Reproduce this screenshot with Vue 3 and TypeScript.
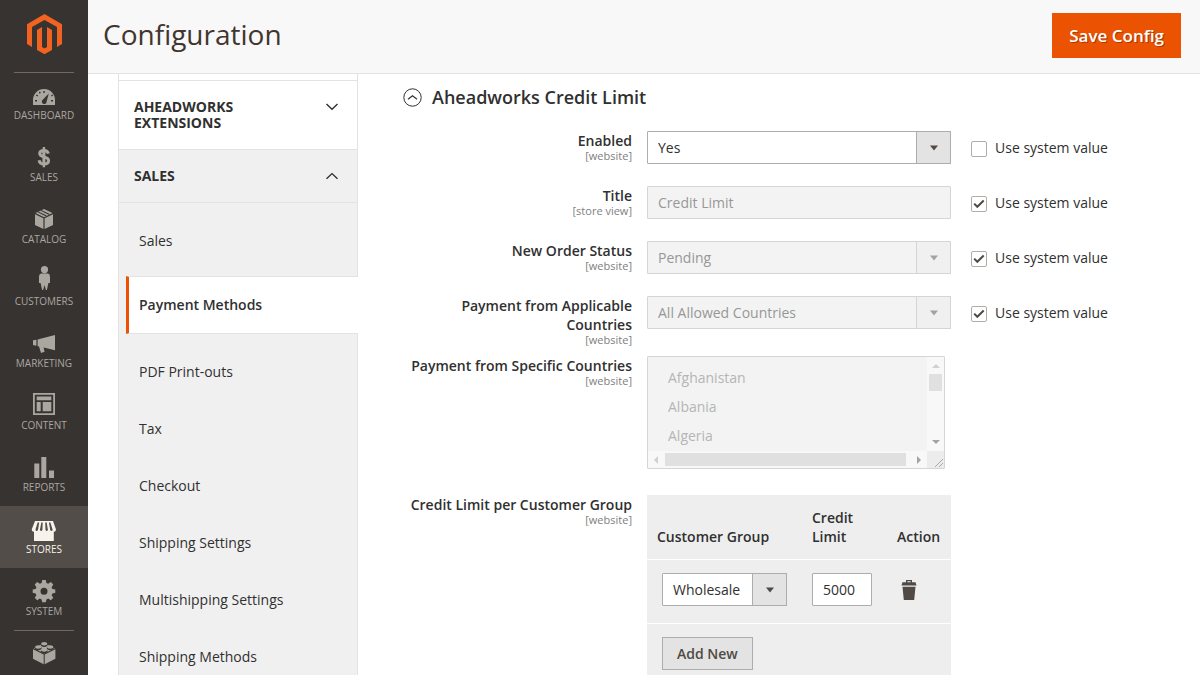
<script setup lang="ts">
import { ref } from 'vue'

interface MenuItem {
  name: string
  label?: string
  shape: string
  cut?: string
  top?: string
  line?: string
  active?: boolean
  divided?: boolean
}

const menu: MenuItem[] = [
  {
    name: 'Dashboard',
    label: 'Dashboard',
    shape: 'M3 22v-5a11 11 0 0 1 22 0v5z',
    cut: 'M13.3 8h1.4v2h-1.4zM8.8 9.3l1.2-.7.8 1.5-1.2.7zM5.9 12.6l.9-1.2 1.4 1-.9 1.2zM5 17h2v1.5H5zM21 17h2v1.5h-2zM21 12.4l1.3-1 .9 1.2-1.4 1zM18.8 10.4l-2.2 8a2.4 2.4 0 1 1-3.6-1.8z',
  },
  {
    name: 'Sales',
    label: 'Sales',
    shape: 'M12.7 2h2.4v3.5h-2.4zM12.7 19h2.4v3.2h-2.4z',
    line: 'M18.4 8.6C17.8 6.4 16.3 5.4 13.9 5.4c-2.6 0-4.2 1.2-4.2 3 0 4.6 8.9 2.4 8.9 7.2 0 2.2-1.7 3.5-4.7 3.5-2.9 0-4.4-1.3-4.8-3.8M13.9 5v14',
  },
  {
    name: 'Catalog',
    label: 'Catalog',
    shape: 'M14 2l8.5 4L14 10.2 5.5 6zM5 7.2l8.4 4.1V22L5 18zM23 7.2l-8.4 4.1V22L23 18z',
    cut: 'M11.2 2.9l8.6 4.2-1.1.6-8.6-4.2zM8.2 4.4l8.6 4.2-1.1.6-8.6-4.2z',
  },
  {
    name: 'Customers',
    label: 'Customers',
    shape: 'M14.5-3a3.6 3.6 0 1 1 0 7.2 3.6 3.6 0 0 1 0-7.2zM11 4.6h7q2 .4 2 3V14h-1.6l-1.5 7h-1l-1.4-5-1.4 5h-1l-1.5-7H9V7.6q0-2.6 2-3z',
  },
  {
    name: 'Marketing',
    label: 'Marketing',
    shape: 'M3 9.2l3.4-.5v6L3 14zM7.6 8.5L25 4v15.2l-11.4-2.7 1 4.3-3.6 1.2-2-6.6-1.4-.4z',
  },
  {
    name: 'Content',
    label: 'Content',
    shape: 'M3 0h22v22H3zm1.8 1.8v18.4h18.4V1.8zM6.7 3.5h14.6v3.8H6.7zM6.7 9h4v9.3h-4zM12.7 9h8.6v9.3h-8.6z',
  },
  {
    name: 'Reports',
    label: 'Reports',
    shape: 'M4.3 8.5h5V23h-5zM11.3 2h5v21h-5zM19 15.4h5V23h-5z',
  },
  {
    name: 'Stores',
    label: 'Stores',
    shape: 'M5 4h18l3 8.6q-.3 2.4-2.2 2.2V24H4V14.8q-2 .2-2.3-2.2z',
    cut: 'M7.6 5.5h1.6L8 13q-1.3 2-2.6 0zM11.3 5.5h1.4l-.3 7.5q-1.3 2-2.5 0zM15.2 5.5h1.5l1.2 7.5q-1.1 2-2.4 0zM18.9 5.5h1.5L22.7 13q-1.2 2-2.5 0z',
    active: true,
  },
  {
    name: 'System',
    label: 'System',
    shape: 'M12.2 1h3.6l.6 3 1.8.8 2.6-1.7 2.5 2.5-1.7 2.6.8 1.8 2.9.6v3.2l-2.9.6-.8 1.8 1.7 2.6-2.5 2.5-2.6-1.7-1.8.8-.6 2.9h-3.6l-.6-2.9-1.8-.8-2.6 1.7-2.5-2.5 1.7-2.6-.8-1.8-2.9-.6v-3.2l2.9-.6.8-1.8-1.7-2.6 2.5-2.5 2.6 1.7 1.8-.8z',
    cut: 'M14 8.7a3.5 3.5 0 1 1 0 7 3.5 3.5 0 0 1 0-7z',
  },
  {
    name: 'Find Partners',
    shape: 'M14.2 2.2l10.6 5-10.6 5.2L3.6 7.2zM3 8.2l10.7 5.2V23.2L3 17.8zM25.4 8.2l-10.7 5.2V23.2l10.7-5.4z',
    cut: 'M10.9 3h6.6v1.8q-3.3 2.6-6.6 0zM4.9 6.2h6.6V8q-3.3 2.6-6.6 0zM16.9 6.2h6.6V8q-3.3 2.6-6.6 0zM10.9 9.2h6.6V11q-3.3 2.6-6.6 0z',
    top: 'M11.2 2.8a3 1.7 0 1 1 6 0 3 1.7 0 1 1-6 0zM5.2 6a3 1.7 0 1 1 6 0 3 1.7 0 1 1-6 0zM17.2 6a3 1.7 0 1 1 6 0 3 1.7 0 1 1-6 0zM11.2 9a3 1.7 0 1 1 6 0 3 1.7 0 1 1-6 0z',
    divided: true,
  },
]

const salesPages = [
  'Sales',
  'Payment Methods',
  'PDF Print-outs',
  'Tax',
  'Checkout',
  'Shipping Settings',
  'Multishipping Settings',
  'Shipping Methods',
]
const currentPage = 'Payment Methods'

interface Setting {
  id: string
  label: string
  scope: string
  kind: 'select' | 'text'
  value: string
  inherit: boolean
}

const settings = ref<Setting[]>([
  { id: 'enabled', label: 'Enabled', scope: '[website]', kind: 'select', value: 'Yes', inherit: false },
  { id: 'title', label: 'Title', scope: '[store view]', kind: 'text', value: 'Credit Limit', inherit: true },
  { id: 'status', label: 'New Order Status', scope: '[website]', kind: 'select', value: 'Pending', inherit: true },
  {
    id: 'countries',
    label: 'Payment from Applicable Countries',
    scope: '[website]',
    kind: 'select',
    value: 'All Allowed Countries',
    inherit: true,
  },
])

const countries = ['Afghanistan', 'Albania', 'Algeria']
const limit = ref('5000')
</script>

<template>
  <div class="admin">
    <nav class="menu" aria-label="Main menu">
      <a class="logo" href="#" aria-label="Magento Admin">
        <svg width="35" height="40" viewBox="0 0 35 40">
          <path
            fill="#f26322"
            d="M0 10.2L17.5 0 35 10.2V30l-5 3V13.1L17.5 5.9 5 13.1V33l-5-3zM10 16l5-3v20l2.5 1.5L20 33V13l5 3v20l-7.5 4.2L10 36z"
          />
        </svg>
      </a>
      <a
        v-for="item in menu"
        :key="item.name"
        href="#"
        class="menu-item"
        :class="{ active: item.active, divided: item.divided }"
        :aria-label="item.name"
      >
        <svg class="menu-icon" width="28" height="28" viewBox="0 0 28 28" aria-hidden="true">
          <path :d="item.shape" fill="currentColor" fill-rule="evenodd" />
          <path v-if="item.line" :d="item.line" fill="none" stroke="currentColor" stroke-width="3" />
          <path v-if="item.cut" :d="item.cut" class="menu-cut" />
          <path v-if="item.top" :d="item.top" fill="currentColor" />
        </svg>
        <span v-if="item.label">{{ item.label }}</span>
      </a>
    </nav>

    <div class="page">
      <header class="header">
        <h1>Configuration</h1>
        <button type="button" class="save">Save Config</button>
      </header>

      <div class="body">
        <aside class="tabs">
          <button type="button" class="tab-title">
            <span>Aheadworks Extensions</span>
            <svg width="12" height="8" viewBox="0 0 12 8" aria-hidden="true">
              <path d="M.5 1L6 6.2 11.5 1" fill="none" stroke="#303030" stroke-width="1.4" />
            </svg>
          </button>
          <section class="tab-open">
            <button type="button" class="tab-title">
              <span>Sales</span>
              <svg width="12" height="8" viewBox="0 0 12 8" aria-hidden="true">
                <path d="M.5 6.8L6 1.6l5.5 5.2" fill="none" stroke="#303030" stroke-width="1.4" />
              </svg>
            </button>
            <ul>
              <li v-for="p in salesPages" :key="p" :class="{ current: p === currentPage }">
                <a href="#">{{ p }}</a>
              </li>
            </ul>
          </section>
        </aside>

        <main class="config">
          <h2>
            <svg width="19" height="19" viewBox="0 0 19 19" aria-hidden="true">
              <circle cx="9.5" cy="9.5" r="8.7" fill="none" stroke="#303030" />
              <path d="M5 11.3l4.5-3.6 4.5 3.6" fill="none" stroke="#303030" stroke-width="1.1" />
            </svg>
            <span>Aheadworks Credit Limit</span>
          </h2>

          <div v-for="s in settings" :key="s.id" class="row">
            <label class="label" :for="s.id">
              {{ s.label }}
              <small>{{ s.scope }}</small>
            </label>
            <div class="value">
              <div v-if="s.kind === 'select'" class="select" :class="{ disabled: s.inherit }">
                <select :id="s.id" :disabled="s.inherit">
                  <option>{{ s.value }}</option>
                </select>
                <span class="arrow">
                  <svg width="8" height="6" viewBox="0 0 8 6"><path d="M0 .5h8L4 5.5z" fill="currentColor" /></svg>
                </span>
              </div>
              <input v-else :id="s.id" v-model="s.value" type="text" class="text" :disabled="s.inherit" />
            </div>
            <label class="inherit">
              <span class="check">
                <input v-model="s.inherit" type="checkbox" />
                <svg v-if="s.inherit" width="16" height="16" viewBox="0 0 16 16" aria-hidden="true">
                  <path d="M3.2 7.6l3.1 3.2 6.4-6.3" fill="none" stroke="#514943" stroke-width="2" />
                </svg>
              </span>
              <span>Use system value</span>
            </label>
          </div>

          <div class="row">
            <label class="label" for="specific">
              Payment from Specific Countries
              <small>[website]</small>
            </label>
            <div class="value list-value">
              <div class="listbox">
                <select id="specific" multiple disabled>
                  <option v-for="c in countries" :key="c">{{ c }}</option>
                </select>
                <div class="bar vertical" aria-hidden="true">
                  <svg width="8" height="4" viewBox="0 0 8 4"><path d="M0 4h8L4 0z" fill="#d0d0d0" /></svg>
                  <i></i>
                  <svg class="last" width="8" height="4" viewBox="0 0 8 4"><path d="M0 0h8L4 4z" fill="#a3a3a3" /></svg>
                </div>
                <div class="bar horizontal" aria-hidden="true">
                  <svg width="4" height="8" viewBox="0 0 4 8"><path d="M4 0v8L0 4z" fill="#d0d0d0" /></svg>
                  <i></i>
                  <svg width="4" height="8" viewBox="0 0 4 8"><path d="M0 0v8l4-4z" fill="#a3a3a3" /></svg>
                </div>
                <svg class="grip" width="17" height="17" viewBox="0 0 17 17" aria-hidden="true">
                  <path d="M8 16l8-8M12 16l4-4" stroke="#a8a8a8" fill="none" />
                </svg>
              </div>
            </div>
          </div>

          <div class="row">
            <div class="label">
              Credit Limit per Customer Group
              <small>[website]</small>
            </div>
            <div class="value">
              <table>
                <thead>
                  <tr>
                    <th class="group-col">Customer Group</th>
                    <th class="limit-col">Credit Limit</th>
                    <th>Action</th>
                  </tr>
                </thead>
                <tbody>
                  <tr>
                    <td>
                      <div class="select">
                        <select aria-label="Customer Group">
                          <option>Wholesale</option>
                        </select>
                        <span class="arrow">
                          <svg width="8" height="6" viewBox="0 0 8 6"><path d="M0 .5h8L4 5.5z" fill="currentColor" /></svg>
                        </span>
                      </div>
                    </td>
                    <td><input v-model="limit" type="text" class="text amount" aria-label="Credit Limit" /></td>
                    <td>
                      <button type="button" class="delete" aria-label="Delete">
                        <svg width="16" height="20" viewBox="0 0 16 20">
                          <path
                            fill="#514943"
                            fill-rule="evenodd"
                            d="M5 0h6v2.3h3.5l1 3.2H.5l1-3.2H5zm1.3 1.2v1.1h3.4V1.2zM1.5 6.7h13L13.2 20H2.8z"
                          />
                        </svg>
                      </button>
                    </td>
                  </tr>
                </tbody>
                <tfoot>
                  <tr>
                    <td colspan="3"><button type="button" class="add">Add New</button></td>
                  </tr>
                </tfoot>
              </table>
            </div>
          </div>
        </main>
      </div>
    </div>
  </div>
</template>

<style>
body {
  margin: 0;
  background: #fff;
}
</style>

<style scoped>
.admin,
.admin * {
  box-sizing: border-box;
}
.admin {
  display: grid;
  grid-template-columns: 88px minmax(0, 1fr);
  height: 100vh;
  overflow: hidden;
  font: 14px/19px 'Open Sans', 'Noto Sans', sans-serif;
  color: #303030;
}
button,
input,
select {
  font: inherit;
  color: inherit;
  margin: 0;
}
a {
  color: inherit;
  text-decoration: none;
}

/* Main menu */
.menu {
  background: #373330;
  overflow: hidden;
}
.logo {
  display: flex;
  justify-content: center;
  height: 72px;
  padding-top: 14px;
}
.menu-item {
  --surface: #373330;
  position: relative;
  display: flex;
  flex-direction: column;
  align-items: center;
  height: 62px;
  padding-top: 11px;
  font-size: 10px;
  line-height: 14px;
  text-transform: uppercase;
  color: #aaa6a0;
  background: var(--surface);
}
.menu-item span {
  margin-top: -3px;
}
.menu-icon {
  flex: none;
  overflow: visible;
}
.menu-cut {
  fill: var(--surface);
}
.menu-item.active {
  --surface: #524d49;
  color: #f7f3eb;
}
.logo + .menu-item::before,
.menu-item.divided::before {
  content: '';
  position: absolute;
  top: 0;
  left: 14px;
  right: 14px;
  border-top: 1px solid #736963;
}

/* Header */
.page {
  display: flex;
  flex-direction: column;
  min-height: 0;
}
.header {
  flex: none;
  display: flex;
  justify-content: space-between;
  align-items: flex-start;
  padding: 13px 19px 15px 15px;
  background: #f8f8f8;
  border-bottom: 1px solid #e3e3e3;
}
h1 {
  margin: 0;
  font-size: 28px;
  line-height: 42px;
  font-weight: 400;
  color: #41362f;
}
.save {
  height: 45px;
  padding: 0 17px;
  border: 0;
  background: #eb5202;
  color: #fff;
  font-size: 17px;
  font-weight: 600;
  text-shadow: 1px 1px 0 rgba(0, 0, 0, 0.3);
}

/* Section tabs */
.body {
  flex: 1;
  min-height: 0;
  display: flex;
  gap: 45px;
  padding: 0 30px;
  overflow: hidden;
}
.tabs {
  flex: none;
  width: 240px;
  height: max-content;
  padding-top: 6px;
  border: solid #e3e3e3;
  border-width: 0 1px;
}
.tab-title {
  display: flex;
  justify-content: space-between;
  align-items: flex-start;
  width: 100%;
  padding: 18px 19px 18px 15px;
  border: 0;
  border-top: 1px solid #e3e3e3;
  background: none;
  font-weight: 700;
  line-height: 16px;
  text-align: left;
  text-transform: uppercase;
}
.tab-title span {
  max-width: 130px;
}
.tab-title svg {
  margin-top: 4px;
}
.tab-open {
  background: #f0f0f0;
}
.tab-open ul {
  margin: 0;
  padding: 9px 0;
  list-style: none;
  border-top: 1px solid #e3e3e3;
}
.tab-open a {
  display: block;
  padding: 19px 20px;
}
.tab-open .current {
  margin: 7px -1px 9px 7px;
  border: solid #e3e3e3;
  border-width: 1px 0;
  border-left: 3px solid #eb5202;
  background: #fff;
  font-weight: 600;
}
.tab-open .current a {
  padding: 18px 10px 19px;
}

/* Settings form */
.config {
  flex: 1;
  min-width: 0;
}
h2 {
  display: flex;
  align-items: center;
  gap: 10px;
  margin: 0 0 23px;
  padding-top: 12px;
  font-size: 18px;
  line-height: 22px;
  font-weight: 600;
}
.row {
  display: grid;
  grid-template-columns: minmax(0, 229fr) minmax(0, 304fr) minmax(0, 204fr);
  column-gap: 15px;
}
.label {
  padding-bottom: 11px;
  font-weight: 600;
  text-align: right;
}
.label small {
  display: block;
  font-size: 11px;
  line-height: 11px;
  font-weight: 400;
  color: #808080;
}
.value {
  padding-bottom: 22px;
}
.list-value {
  padding-bottom: 26px;
}
.select {
  display: grid;
}
.select select,
.text {
  width: 100%;
  height: 33px;
  padding: 0 10px;
  border: 1px solid #adadad;
  border-radius: 1px;
  background: #fff;
  appearance: none;
  outline: 0;
}
.select select {
  grid-area: 1 / 1;
}
.arrow {
  grid-area: 1 / 1;
  justify-self: end;
  display: grid;
  place-items: center;
  width: 35px;
  border: 1px solid #adadad;
  background: #e3e3e3;
  color: #514943;
  pointer-events: none;
}
.select select:disabled,
.text:disabled {
  background: #f3f3f3;
  border-color: #d5d5d5;
  color: #979797;
  opacity: 1;
}
.disabled .arrow {
  background: #f0f0f0;
  border-color: #d5d5d5;
  color: #a5a19e;
}
.inherit {
  display: flex;
  align-items: flex-start;
  gap: 8px;
  padding: 7px 0 0 5px;
}
.check {
  display: grid;
  margin-top: 3px;
}
.check input {
  grid-area: 1 / 1;
  width: 16px;
  height: 16px;
  border: 1px solid #adadad;
  border-radius: 2px;
  background: #fff;
  appearance: none;
}
.check svg {
  grid-area: 1 / 1;
  pointer-events: none;
}

/* Country list */
.listbox {
  display: grid;
  grid-template-columns: minmax(0, 1fr) 17px;
  grid-template-rows: 94px 17px;
  margin-right: 6px;
  border: 1px solid #d5d5d5;
  border-radius: 1px;
  background: #f8f8f8;
}
.listbox select {
  width: 100%;
  height: 100%;
  padding: 6px 10px;
  border: 0;
  border-radius: 0;
  background: #f3f3f3;
  opacity: 1;
  overflow: hidden;
}
.listbox option {
  padding: 5px 10px;
  min-height: 29px;
  line-height: 19px;
  color: #b5b5b5;
}
.bar {
  display: flex;
  align-items: center;
}
.bar i {
  background: #e0e0e0;
}
.vertical {
  flex-direction: column;
  padding: 7px 0;
}
.vertical i {
  width: 13px;
  height: 17px;
  margin-top: 6px;
}
.vertical .last {
  margin-top: auto;
}
.horizontal {
  padding: 0 6px;
}
.horizontal i {
  flex: 1;
  height: 13px;
  margin: 0 11px 0 7px;
}
.grip {
  background: #ececec;
}

/* Customer group limits */
table {
  width: 100%;
  border-collapse: collapse;
  background: #eee;
}
th {
  padding: 13px 10px;
  font-weight: 600;
  text-align: left;
  vertical-align: bottom;
}
.group-col {
  width: 155px;
}
.limit-col {
  width: 85px;
}
td {
  padding: 13px 10px 17px;
  border-top: 1px solid #fff;
}
td:first-child {
  padding-left: 15px;
  padding-right: 15px;
}
.amount {
  width: 60px;
  display: block;
}
.delete {
  display: block;
  padding: 0 4px;
  border: 0;
  background: none;
}
.delete svg {
  display: block;
}
.add {
  display: block;
  height: 33px;
  padding: 0 14px;
  border: 1px solid #adadad;
  background: #e3e3e3;
  color: #514943;
  font-weight: 600;
}
</style>
